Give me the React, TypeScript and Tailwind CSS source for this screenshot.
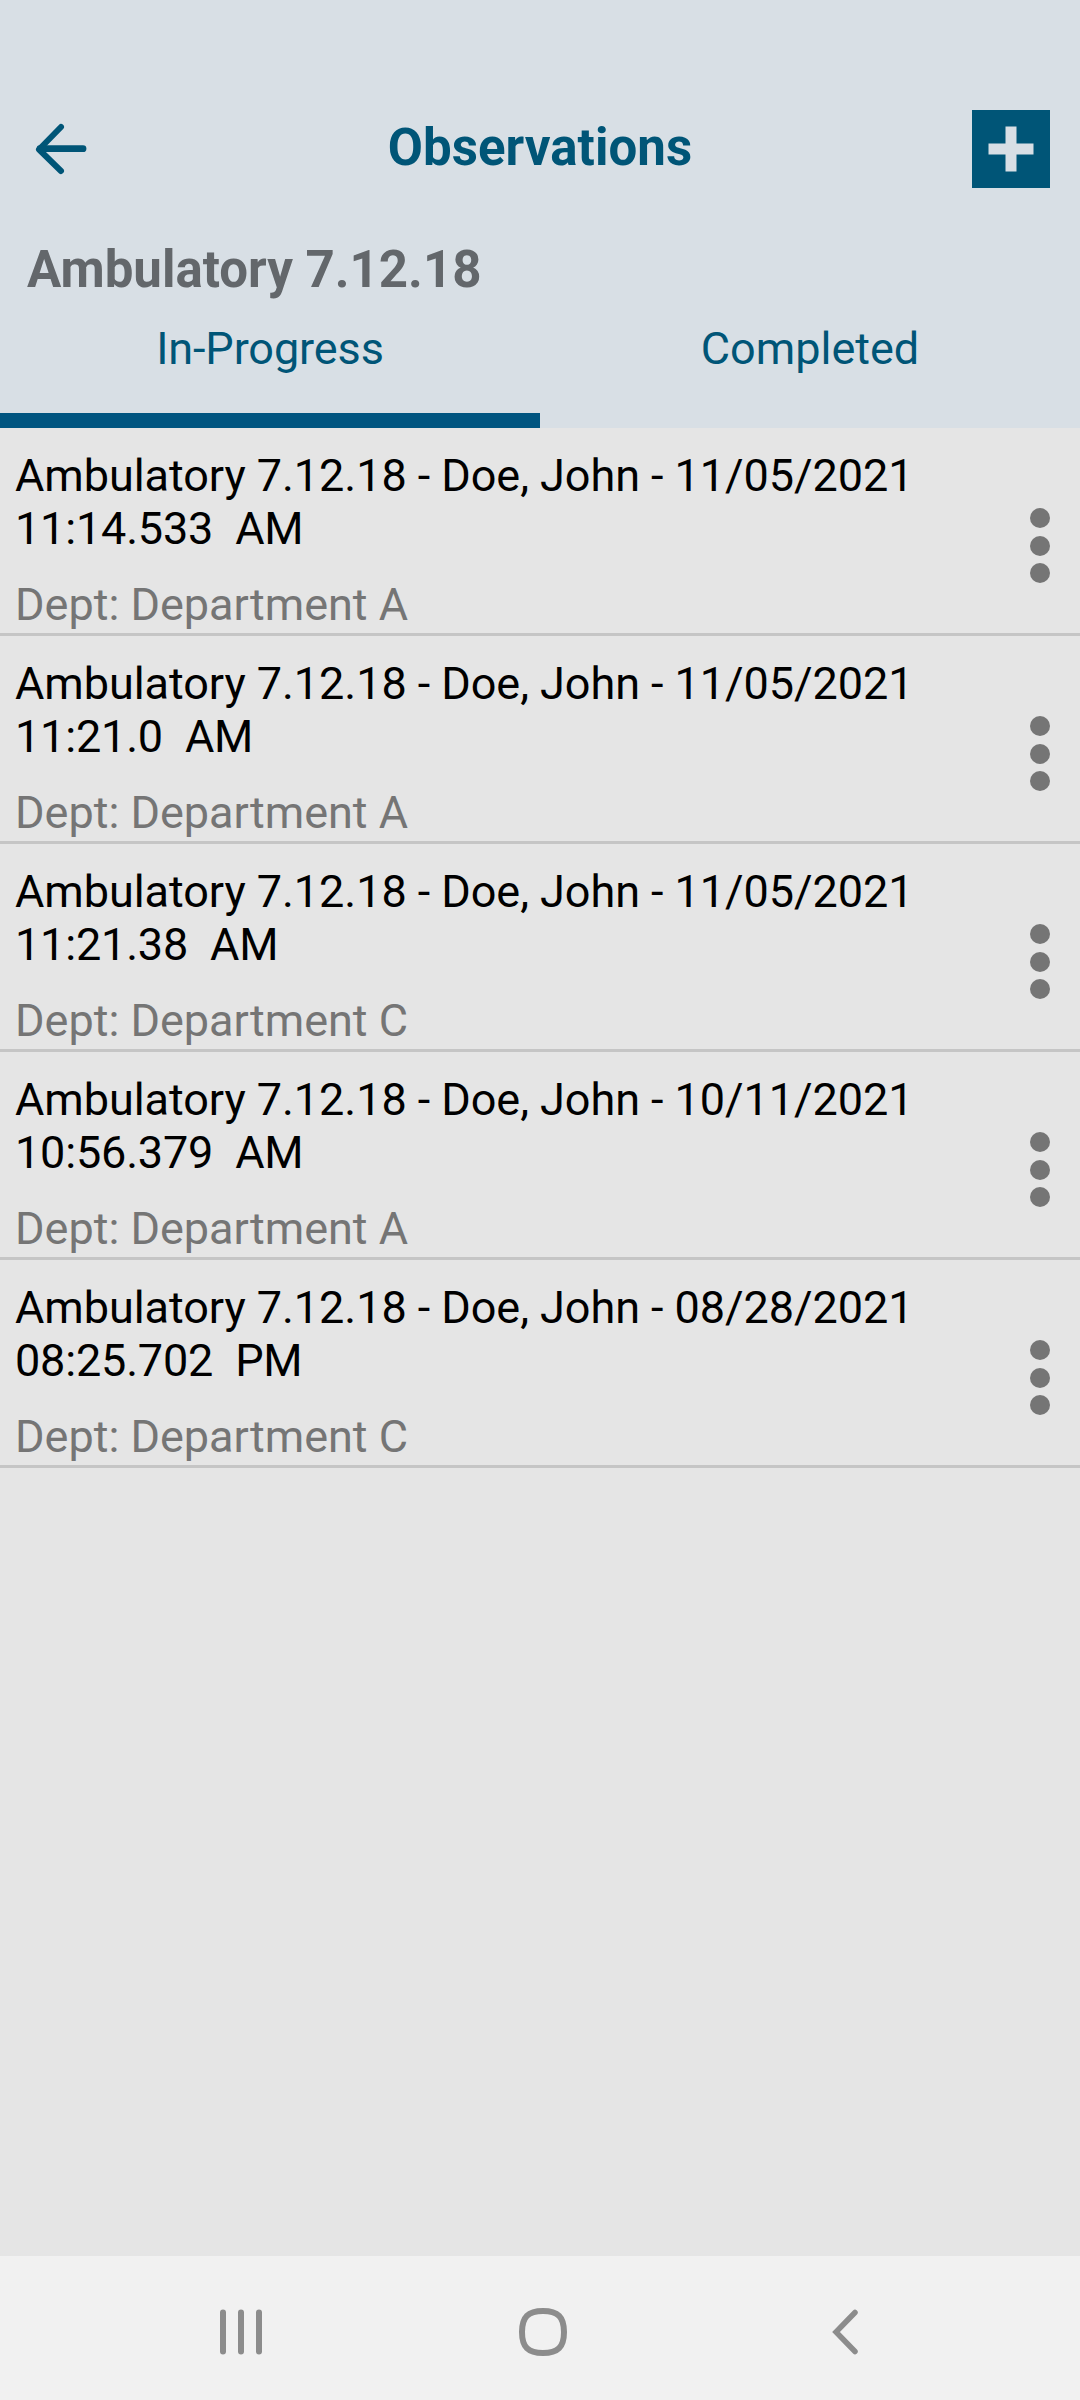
interface Observation {
  title: string;
  time: string;
  dept: string;
}

const observations: Observation[] = [
  { title: 'Ambulatory 7.12.18 - Doe, John - 11/05/2021', time: '11:14.533  AM', dept: 'Department A' },
  { title: 'Ambulatory 7.12.18 - Doe, John - 11/05/2021', time: '11:21.0  AM', dept: 'Department A' },
  { title: 'Ambulatory 7.12.18 - Doe, John - 11/05/2021', time: '11:21.38  AM', dept: 'Department C' },
  { title: 'Ambulatory 7.12.18 - Doe, John - 10/11/2021', time: '10:56.379  AM', dept: 'Department A' },
  { title: 'Ambulatory 7.12.18 - Doe, John - 08/28/2021', time: '08:25.702  PM', dept: 'Department C' },
];

function Header() {
  return (
    <header className="flex h-[428px] flex-col bg-[#d8dfe5] pt-[110px] text-[#005577]">
      <div className="flex h-[78px] items-center justify-between pr-[30px] pl-[35px]">
        <button aria-label="Back" className="w-[73px]">
          <svg width="52" height="52" viewBox="0 0 52 52" fill="none" stroke="currentColor" strokeWidth="6" strokeLinecap="round">
            <path d="M26 4 L4 26.5 L26 48" strokeLinejoin="round" />
            <path d="M5 25.7 H48" strokeWidth="6.8" />
          </svg>
        </button>
        <h1 className="pb-0.5 text-[51px] leading-[58px] font-bold tracking-[0.05px]">Observations</h1>
        <button aria-label="Add observation">
          <svg width="78" height="78" viewBox="0 0 78 78">
            <rect width="78" height="78" fill="#005577" />
            <path d="M33.5 16.5h11v17h17v11h-17v17h-11v-17h-17v-11h17z" fill="#d8dfe5" />
          </svg>
        </button>
      </div>
      <h2 className="mt-[53px] pl-[27px] text-[51px] leading-[58px] font-bold text-[#63676b]">Ambulatory 7.12.18</h2>
      <nav className="mt-[23px] flex grow text-center text-[45px] leading-[53px]">
        <button className="flex w-1/2 items-start justify-center border-b-[15px] border-[#005580] tracking-[-0.1px]">
          In-Progress
        </button>
        <button className="flex w-1/2 items-start justify-center">Completed</button>
      </nav>
    </header>
  );
}

function ObservationRow({ title, time, dept }: Observation) {
  return (
    <li className="flex h-[208px] justify-between border-b-[3px] border-[#c5c5c5] pt-[21px] pr-[30px] pl-[15px] text-[45px] leading-[53px]">
      <div className="whitespace-pre">
        <p className="tracking-[-0.05px] text-black">{title}</p>
        <p className="tracking-[-0.18px] text-black">{time}</p>
        <p className="mt-[23px] text-[#757575]">Dept: {dept}</p>
      </div>
      <button aria-label="More options" className="mt-[59px] flex h-[75px] flex-col justify-between">
        <span className="size-5 rounded-full bg-[#757575]" />
        <span className="size-5 rounded-full bg-[#757575]" />
        <span className="size-5 rounded-full bg-[#757575]" />
      </button>
    </li>
  );
}

function SystemNav() {
  return (
    <footer className="flex h-[144px] items-center bg-[#f1f1f1] pt-2 pl-[220px] text-[#8c8c8c]">
      <svg width="42" height="48" viewBox="0 0 42 48" fill="none" stroke="currentColor" strokeWidth="6" strokeLinecap="round">
        <path d="M3 4.5V43.5M21 4.5V43.5M39 4.5V43.5" />
      </svg>
      <svg className="ml-[257px]" width="48" height="48" viewBox="0 0 48 48" fill="none" stroke="currentColor" strokeWidth="6">
        <path d="M24 3C39 3 45 9 45 24S39 45 24 45S3 39 3 24S9 3 24 3Z" />
      </svg>
      <svg className="ml-[265px]" width="26" height="48" viewBox="0 0 26 48" fill="none" stroke="currentColor" strokeWidth="5.5" strokeLinecap="round">
        <path d="M23 4.5L4 24L23 43.5" />
      </svg>
    </footer>
  );
}

function App() {
  return (
    <div className="flex h-[2400px] w-[1080px] flex-col overflow-hidden bg-[#e5e5e5] font-[Roboto,sans-serif]">
      <Header />
      <ul className="grow">
        {observations.map((item) => (
          <ObservationRow key={item.title + item.time} {...item} />
        ))}
      </ul>
      <SystemNav />
    </div>
  );
}

export default App;
